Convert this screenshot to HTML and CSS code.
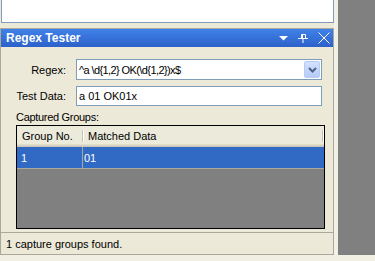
FILE: index.html
```html
<!DOCTYPE html>
<html lang="en">
<head>
  <meta charset="UTF-8">
  <meta name="viewport" content="width=device-width, initial-scale=1.0">
  <title>Regex Tester</title>
  <link rel="stylesheet" href="styles.css">
</head>
<body>

  <div class="workspace">
    <div class="dock">
      <div class="doc-pane"></div>

      <!-- Tool window -->
      <div class="tool-window">
        <div class="caption">
          <span class="caption-title">Regex Tester</span>
          <span class="caption-buttons">
            <svg width="9" height="5" viewBox="0 0 9 5"><path d="M0 0H9L4.5 4.5Z" fill="#fff"/></svg>
            <svg width="10" height="9" viewBox="0 0 10 9"><path d="M3.5 0.5H7.5V4.5M3.5 0.5V4.5M4.5 0.5V4.5M0 4.5H10M5 4.5V9" stroke="#fff" fill="none"/></svg>
            <svg width="12" height="12" viewBox="0 0 12 12"><path d="M0.5 0.5L11.5 11.5M11.5 0.5L0.5 11.5" stroke="#fff" fill="none"/></svg>
          </span>
        </div>

        <div class="tool-body">
          <div class="field-row">
            <label class="field-label">Regex:</label>
            <div class="combo">
              <span class="combo-text">^a \d{1,2} OK(\d{1,2})x$</span>
              <span class="combo-btn">
                <svg width="9" height="6" viewBox="0 0 9 6"><path d="M1 1L4.5 4.5L8 1" stroke="#4d6185" stroke-width="2" fill="none"/></svg>
              </span>
            </div>
          </div>
          <div class="field-row">
            <label class="field-label">Test Data:</label>
            <div class="textbox">a 01 OK01x</div>
          </div>

          <div class="group-label">Captured Groups:</div>
          <div class="listview">
            <div class="lv-header">
              <div class="lv-col col-no">Group No.</div>
              <div class="lv-col col-data">Matched Data</div>
            </div>
            <div class="lv-row selected">
              <div class="lv-cell col-no">1</div>
              <div class="lv-cell col-data">01</div>
            </div>
          </div>
        </div>

        <div class="status">1 capture groups found.</div>
      </div>
    </div>
    <div class="splitter"></div>
    <div class="desktop"></div>
  </div>
  <div class="footer"></div>

</body>
</html>
```

FILE: styles.css
```css
/* Regex Tester tool window */
body {
  margin: 0;
  padding: 0;
  width: 375px;
  height: 261px;
  overflow: hidden;
  background-color: #ece9d8;
  font-family: "Liberation Sans", Arial, sans-serif;
  font-size: 11px;
  color: #000;
  display: flex;
  flex-direction: column;
}

.workspace {
  display: flex;
  height: 255px;
}

.dock {
  width: 334px;
  display: flex;
  flex-direction: column;
}

.splitter {
  width: 4px;
  background-color: #f3f1e7;
}

.desktop {
  flex: 1;
  background-color: #808080;
}

.footer {
  flex: 1;
  background-color: #f1efe3;
}

.doc-pane {
  margin-left: 1px;
  height: 22px;
  background-color: #fff;
  border: 1px solid #7f9db9;
  border-top: none;
}

.tool-window {
  margin-top: 5px;
  flex: 1;
  display: flex;
  flex-direction: column;
  border: 1px solid #aca899;
}

/* Caption bar */
.caption {
  height: 18px;
  display: flex;
  align-items: center;
  justify-content: space-between;
  padding-left: 5px;
  background: linear-gradient(#3f82ea, #2c61c8);
  color: #fff;
}

.caption-title {
  font-size: 12px;
  font-weight: bold;
}

.caption-buttons {
  display: flex;
  align-items: center;
  gap: 10px;
  padding-right: 3px;
}

.caption-buttons svg {
  display: block;
}

/* Form body */
.tool-body {
  flex: 1;
  padding-top: 12px;
}

.field-row {
  display: grid;
  grid-template-columns: 65px 1fr;
  column-gap: 10px;
  align-items: center;
  padding-right: 11px;
  margin-bottom: 6px;
}

.field-label {
  text-align: right;
}

.combo,
.textbox {
  background-color: #fff;
  border: 1px solid #7f9db9;
  box-sizing: border-box;
  display: flex;
  align-items: center;
  padding-left: 2px;
}

.combo {
  height: 21px;
  justify-content: space-between;
  padding-right: 1px;
}

.combo-text {
  letter-spacing: -0.6px;
}

.textbox {
  height: 20px;
}

.combo-btn {
  width: 16px;
  height: 17px;
  box-sizing: border-box;
  border: 1px solid #b9cbf3;
  border-radius: 2px;
  background: linear-gradient(#d3e1fd, #b5cbf7);
  display: flex;
  align-items: center;
  justify-content: center;
}

.group-label {
  padding-left: 15px;
  margin-top: -2px;
  line-height: 14px;
  margin-bottom: 1px;
  letter-spacing: -0.3px;
}

/* List view */
.listview {
  margin-left: 15px;
  margin-right: 8px;
  height: 102px;
  border: 1px solid #000;
  background-color: #808080;
}

.lv-header {
  display: flex;
  height: 21px;
  background-color: #ebeadb;
  box-shadow: inset 0 -1px 0 #cbc7b8, inset 0 -2px 0 #d6d2c2, inset 0 -3px 0 #e2decd;
}

.lv-col {
  display: flex;
  align-items: center;
  padding-left: 5px;
  padding-bottom: 2px;
  box-sizing: border-box;
  position: relative;
}

.lv-col::after {
  content: "";
  position: absolute;
  right: 0;
  top: 4px;
  bottom: 5px;
  width: 1px;
  background-color: #c7c5b2;
  box-shadow: 1px 0 0 #fff;
}

.lv-header .col-no {
  width: 66px;
}

.lv-header .col-data {
  width: 240px;
}

.lv-row {
  display: flex;
  height: 21px;
  border-bottom: 1px solid #aca899;
}

.lv-row.selected {
  background-color: #316ac5;
  color: #fff;
}

.lv-cell {
  display: flex;
  align-items: center;
  box-sizing: border-box;
}

.lv-row .col-no {
  width: 66px;
  padding-left: 4px;
  border-right: 1px solid #aca899;
}

.lv-row .col-data {
  flex: 1;
  padding-left: 1px;
}

/* Status bar */
.status {
  height: 21px;
  display: flex;
  align-items: center;
  padding-left: 5px;
  border-top: 1px solid #aca899;
  background-color: #ece9d8;
}
```
